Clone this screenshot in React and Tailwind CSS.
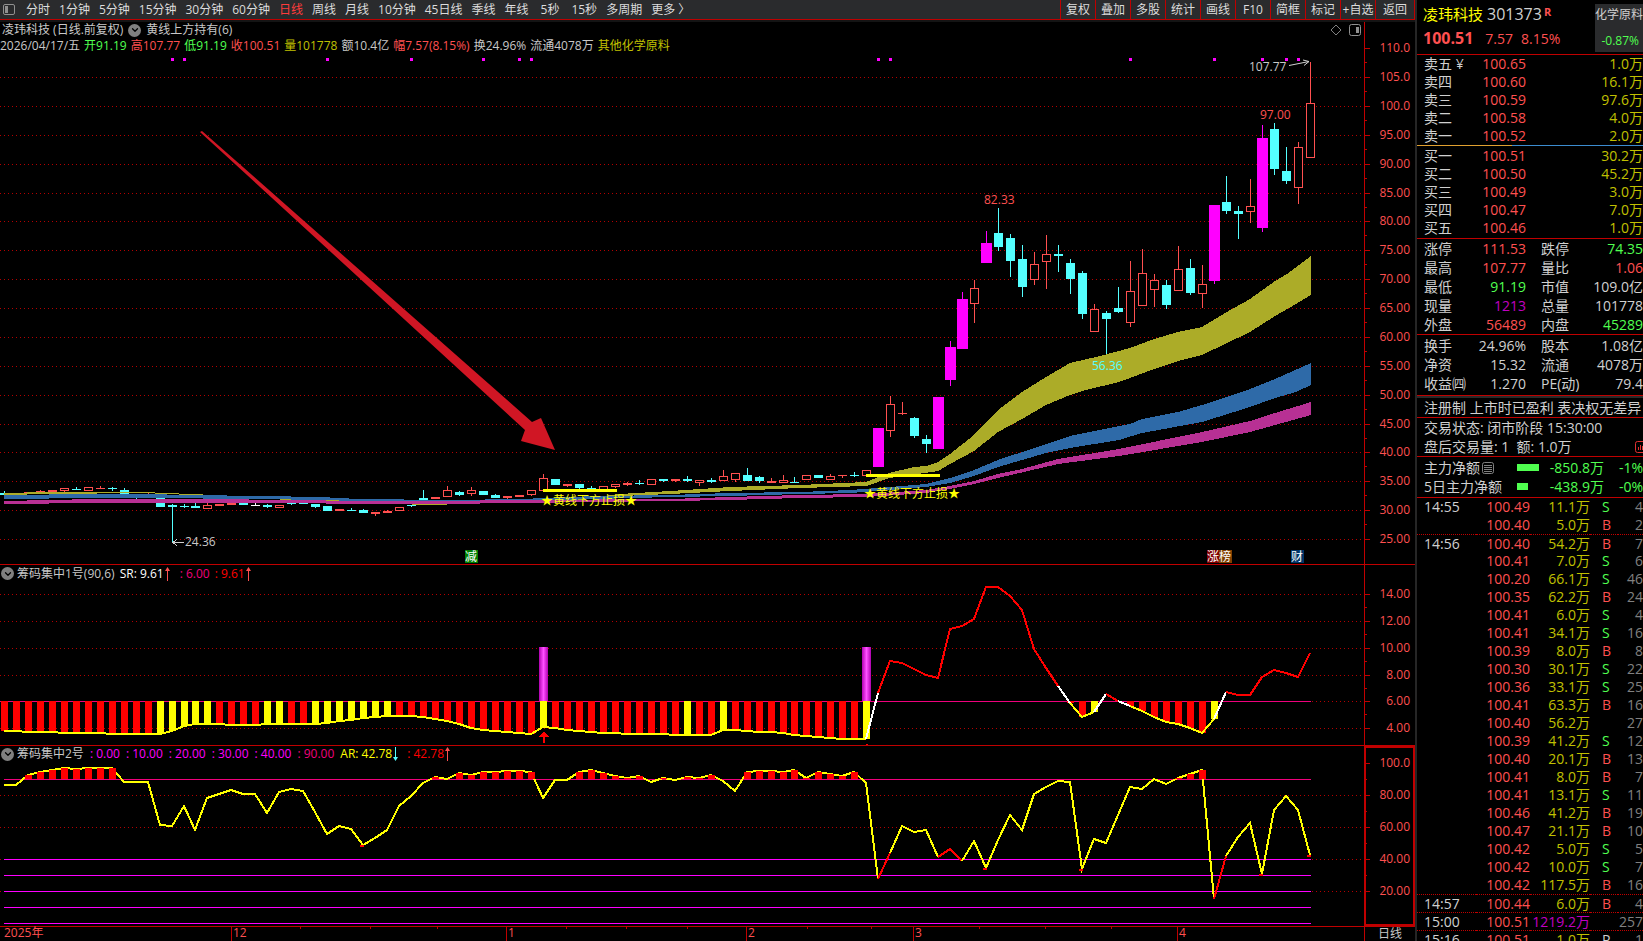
import { ChevronDown } from 'lucide-react';

const periods = ['分时', '1分钟', '5分钟', '15分钟', '30分钟', '60分钟', '日线', '周线', '月线', '10分钟', '45日线', '季线', '年线', '5秒', '15秒', '多周期', '更多 〉'];
const tools = ['复权', '叠加', '多股', '统计', '画线', 'F10', '简框', '标记', '+自选'];

//type, high, body top, body bottom, low. r = hollow red, c = cyan, m = limit up, w = flat
const candles = [
  ['c', 491, 493, 495, 495], ['c', 494, 494, 495, 496], ['r', 492, 492, 493, 493], ['r', 490, 491, 493, 493], ['r', 490, 490, 492, 492],
  ['r', 488, 488, 491, 492], ['c', 487, 489, 490, 490], ['r', 487, 487, 491, 491], ['r', 486, 488, 489, 489], ['c', 487, 488, 489, 491],
  ['c', 488, 490, 494, 494], ['c', 494, 494, 496, 499], ['r', 493, 494, 495, 495], ['c', 496, 497, 507, 507], ['c', 504, 505, 507, 542],
  ['c', 504, 506, 507, 508], ['c', 503, 506, 508, 508], ['r', 503, 505, 509, 509], ['r', 504, 504, 506, 506], ['r', 503, 503, 505, 505],
  ['c', 503, 503, 505, 505], ['w', 503, 505, 506, 506], ['c', 504, 505, 507, 508], ['r', 505, 505, 508, 508], ['c', 503, 503, 504, 505],
  ['c', 503, 503, 504, 504], ['c', 504, 504, 507, 508], ['c', 506, 506, 511, 511], ['r', 509, 509, 511, 511], ['c', 508, 510, 511, 511],
  ['c', 509, 510, 513, 513], ['r', 512, 512, 514, 516], ['r', 510, 511, 513, 513], ['r', 507, 507, 511, 511], ['c', 505, 505, 506, 507],
  ['c', 490, 498, 500, 500], ['r', 497, 497, 499, 499], ['r', 486, 490, 497, 497], ['c', 491, 492, 495, 496], ['r', 487, 490, 494, 496],
  ['c', 491, 491, 495, 495], ['c', 494, 495, 498, 498], ['r', 496, 496, 498, 499], ['r', 495, 495, 497, 497], ['r', 490, 490, 495, 496],
  ['r', 474, 478, 491, 491], ['c', 479, 479, 485, 485], ['r', 484, 484, 486, 487], ['c', 484, 484, 488, 489], ['c', 486, 488, 490, 490],
  ['r', 486, 486, 490, 490], ['r', 484, 484, 487, 488], ['r', 482, 483, 485, 486], ['c', 480, 483, 484, 485], ['r', 479, 479, 485, 485],
  ['c', 479, 479, 481, 482], ['r', 479, 479, 481, 482], ['c', 476, 479, 481, 482], ['r', 480, 480, 483, 486], ['c', 478, 480, 482, 483],
  ['r', 470, 476, 481, 481], ['r', 473, 473, 480, 482], ['c', 468, 475, 481, 481], ['c', 476, 477, 481, 483], ['r', 478, 481, 483, 483],
  ['r', 475, 480, 483, 483], ['c', 477, 482, 483, 483], ['r', 475, 475, 480, 480], ['c', 475, 475, 478, 478], ['r', 474, 476, 480, 480],
  ['r', 475, 475, 476, 478], ['c', 472, 475, 476, 477], ['r', 470, 470, 476, 476], ['m', 428, 428, 467, 467], ['r', 396, 404, 431, 437],
  ['r', 402, 413, 414, 415], ['c', 417, 418, 436, 438], ['c', 435, 439, 444, 453], ['m', 397, 397, 449, 449], ['m', 341, 347, 380, 386],
  ['m', 292, 299, 349, 349], ['r', 280, 288, 304, 323], ['m', 231, 243, 263, 263], ['c', 208, 233, 247, 251], ['c', 234, 238, 261, 277],
  ['c', 245, 259, 287, 297], ['r', 252, 264, 280, 285], ['r', 235, 254, 262, 289], ['c', 245, 254, 256, 272], ['c', 259, 263, 279, 294],
  ['c', 271, 273, 314, 319], ['r', 304, 309, 332, 332], ['c', 311, 313, 319, 354], ['c', 287, 308, 312, 313], ['r', 261, 291, 323, 327],
  ['r', 249, 273, 306, 306], ['r', 274, 280, 290, 307], ['c', 280, 285, 305, 309], ['r', 246, 269, 291, 291], ['c', 259, 268, 293, 295],
  ['r', 265, 284, 294, 308], ['m', 205, 205, 281, 284], ['c', 176, 202, 211, 214], ['c', 206, 211, 214, 239], ['r', 179, 206, 212, 223],
  ['m', 125, 138, 228, 232], ['c', 123, 129, 169, 175], ['c', 147, 171, 181, 184], ['r', 142, 147, 188, 204], ['r', 62, 103, 158, 158],
];
const candleColors = { r: '#ff5050', c: '#54ffff', m: '#ff00ff', w: '#ffffff' };

//moving average ribbons, upper edge left to right then lower edge right to left
const ribbons = [
  {
    color: '#acac28',
    top: '4,493 50,492 143,492 191,494 215,495 262,498 334,500 382,503 441,504 477,501 525,500 597,497 620,494 670,491 730,487 800,485 866,482 889,473 914,467 926,466 938,462 950,454 974,435 998,410 1022,392 1046,377 1070,363 1100,356 1130,348 1154,339 1178,332 1202,327 1225,313 1250,299 1275,281 1287,274 1311,256',
    bottom: '1311,295 1296,304 1275,316 1250,332 1225,344 1202,355 1178,361 1154,369 1130,378 1119,382 1082,391 1070,395 1046,405 1022,419 998,432 974,451 950,464 938,471 889,478 878,482 866,486 800,488 730,491 670,494 620,496 597,499 525,502 477,502 441,505 382,504 334,501 262,499 215,496 191,495 143,493 50,494 4,495',
  },
  {
    color: '#2e6aa8',
    top: '4,495 94,494 143,494 191,495 262,496 320,497 358,499 450,500 520,499 597,496 670,495 730,493 800,492 850,490 878,488 926,484 950,478 974,470 998,460 1046,444 1070,436 1094,431 1130,424 1142,419 1178,412 1202,405 1250,389 1275,379 1311,363',
    bottom: '1311,385 1296,392 1275,398 1250,407 1202,422 1142,433 1119,440 1070,448 1046,453 998,467 974,476 950,483 926,487 878,491 850,493 800,494 730,496 670,497 597,499 520,501 450,502 358,501 320,500 262,499 143,498 94,498 4,499',
  },
  {
    color: '#b83094',
    top: '4,501 94,499 190,499 305,500 346,501 440,501 520,500 670,499 730,497 800,495 866,494 926,490 950,486 974,481 998,474 1022,469 1058,459 1119,449 1202,432 1250,421 1275,413 1311,402',
    bottom: '1311,415 1250,432 1202,442 1119,456 1058,464 998,478 974,484 950,489 926,493 866,497 800,498 730,500 670,501 520,503 440,504 346,504 305,503 190,503 94,503 4,504',
  },
];

const signalDots = [14, 15, 27, 34, 40, 43, 44, 73, 74, 94, 101, 105, 107, 108];

const srLine = [
  731, 731, 732, 732, 732, 733, 733, 733, 733, 734, 734, 734, 734, 734, 731, 726, 724, 724, 724, 725, 725, 725,
  724, 724, 724, 724, 724, 723, 721, 720, 718, 717, 716, 716, 716, 717, 719, 721, 724, 728, 730, 731, 732, 733, 734,
  727, 728, 730, 731, 732, 733, 733, 734, 734, 734, 734, 735, 735, 735, 735, 730, 730, 731, 732, 732, 733, 735,
  736, 737, 738, 739, 739, 739, 693, 661, 663, 669, 675, 678, 629, 626, 619, 587, 587, 596, 610, 649, 668, 686,
  703, 717, 712, 694, 701, 706, 711, 717, 722, 724, 728, 733, 719, 692, 695, 695, 677, 670, 673, 677, 653,
];
const srSegments = [
  [0, 72, '#ffff00'], [72, 73, '#ffffff'], [73, 88, '#ff0000'], [88, 89, '#ffffff'], [89, 91, '#ffff00'], [91, 92, '#ffffff'],
  [92, 93, '#ff0000'], [93, 94, '#ffffff'], [94, 101, '#ffff00'], [101, 102, '#ffffff'], [102, 109, '#ff0000'],
];
const srYellowBars = [13, 14, 15, 16, 17, 22, 23, 26, 27, 28, 29, 30, 31, 32, 45, 57, 60, 72, 91, 101];

const arLine = [
  785, 785, 775, 772, 770, 768, 769, 768, 768, 768, 782, 782, 782, 825, 826, 806, 830, 798, 794, 790, 794, 794,
  813, 792, 789, 791, 812, 834, 826, 829, 845, 838, 830, 806, 796, 783, 777, 779, 773, 775, 772, 772, 771, 771, 772,
  798, 780, 780, 772, 770, 773, 776, 778, 776, 782, 778, 780, 777, 778, 775, 781, 791, 772, 771, 771, 772, 770,
  778, 772, 774, 776, 772, 783, 879, 853, 826, 832, 830, 857, 849, 861, 841, 868, 840, 815, 830, 794, 787, 781,
  782, 869, 839, 843, 815, 787, 789, 779, 784, 778, 774, 770, 899, 856, 837, 823, 874, 810, 796, 810, 855,
];
const arSegments = [
  [0, 73, '#ffff00'], [73, 74, '#ff0000'], [74, 78, '#ffff00'], [78, 80, '#ff0000'], [80, 101, '#ffff00'], [101, 102, '#ff0000'], [102, 109, '#ffff00'],
];

const priceTicks = [110, 105, 100, 95, 90, 85, 80, 75, 70, 65, 60, 55, 50, 45, 40, 35, 30, 25].map((v, i) => ({
  label: v > 99 ? v.toFixed(1) : v.toFixed(2),
  y: Math.round(48.2 + i * 28.87),
}));
const srTicks = [14, 12, 10, 8, 6, 4].map((v, i) => ({ label: v.toFixed(2), y: Math.round(594.2 + i * 26.8) }));
const arTicks = [100, 80, 60, 40, 20].map((v, i) => ({ label: v > 99 ? v.toFixed(1) : v.toFixed(2), y: 763 + i * 32 }));

const asks = [['卖五', '100.65', '1.0万'], ['卖四', '100.60', '16.1万'], ['卖三', '100.59', '97.6万'], ['卖二', '100.58', '4.0万'], ['卖一', '100.52', '2.0万']];
const bids = [['买一', '100.51', '30.2万'], ['买二', '100.50', '45.2万'], ['买三', '100.49', '3.0万'], ['买四', '100.47', '7.0万'], ['买五', '100.46', '1.0万']];

const R = 'text-[#ff5050]';
const G = 'text-[#50ff50]';
const W = 'text-[#d0d0d0]';
const P = 'text-[#c000c0]';
const Y = 'text-[#c0c000]';

const quotes = [
  ['涨停', '111.53', R], ['跌停', '74.35', G], ['最高', '107.77', R], ['量比', '1.06', R], ['最低', '91.19', G],
  ['市值', '109.0亿', W], ['现量', '1213', P], ['总量', '101778', W], ['外盘', '56489', R], ['内盘', '45289', G],
];
const basics = [['换手', '24.96%', W], ['股本', '1.08亿', W], ['净资', '15.32', W], ['流通', '4078万', W], ['收益㈣', '1.270', W], ['PE(动)', '79.4', W]];

const trades = [
  ['14:55', '100.49', '11.1万', 'S', 4], ['', '100.40', '5.0万', 'B', 2], ['14:56', '100.40', '54.2万', 'B', 7],
  ['', '100.41', '7.0万', 'S', 6], ['', '100.20', '66.1万', 'S', 46], ['', '100.35', '62.2万', 'B', 24],
  ['', '100.41', '6.0万', 'S', 4], ['', '100.41', '34.1万', 'S', 16], ['', '100.39', '8.0万', 'B', 8],
  ['', '100.30', '30.1万', 'S', 22], ['', '100.36', '33.1万', 'S', 25], ['', '100.41', '63.3万', 'B', 16],
  ['', '100.40', '56.2万', '', 27], ['', '100.39', '41.2万', 'S', 12], ['', '100.40', '20.1万', 'B', 13],
  ['', '100.41', '8.0万', 'B', 7], ['', '100.41', '13.1万', 'S', 11], ['', '100.46', '41.2万', 'B', 19],
  ['', '100.47', '21.1万', 'B', 10], ['', '100.42', '5.0万', 'S', 5], ['', '100.42', '10.0万', 'S', 7],
  ['', '100.42', '117.5万', 'B', 16], ['14:57', '100.44', '6.0万', 'B', 4], ['15:00', '100.51', '1219.2万', '', 257],
  ['15:16', '100.51', '1.0万', 'P', 1],
];
const sideColors = { S: G, B: R, P: W };

const xOf = (i) => Math.floor(4.3 + i * 11.98);
const pointsOf = (line, from, to) => line.slice(from, to + 1).map((y, k) => `${xOf(from + k)},${y}`).join(' ');

function Grid({ ticks }) {
  return ticks.map((t) => (
    <line key={t.y} x1="0" x2="1362" y1={t.y + 0.5} y2={t.y + 0.5} stroke="#b40000" strokeDasharray="1 3" />
  ));
}

function Lines({ line, segments }) {
  return segments.map(([from, to, color]) => (
    <polyline key={from} points={pointsOf(line, from, to)} fill="none" stroke={color} strokeWidth="2" />
  ));
}

//scale at the right of each chart
function Axis({ ticks, top, height, half, boxed }) {
  return (
    <svg className="h-full w-[51px] shrink-0" viewBox={`1364 ${top} 51 ${height}`} preserveAspectRatio="none" shapeRendering="crispEdges">
      <rect x="1364" y={top} width="1" height={height} fill="#c00000" />
      {boxed && <rect x="1365" y={top + 1} width="49" height={height - 2} fill="none" stroke="#c00000" strokeWidth="2" />}
      {ticks.map((t, i) => (
        <g key={t.y}>
          <rect x="1365" y={t.y} width="5" height="1" fill="#c00000" />
          {i < ticks.length - 1 && <rect x="1365" y={t.y + half} width="2" height="1" fill="#c00000" />}
          <text x="1410" y={t.y + 4} textAnchor="end" fontSize="12" fill="#ff5050">{t.label}</text>
        </g>
      ))}
    </svg>
  );
}

function Candle({ data, i }) {
  const [type, high, top, bottom, low] = data;
  const x = xOf(i);
  const color = candleColors[type];
  const w = type === 'm' ? 11 : 9;
  const h = Math.max(bottom - top, 1);
  const hollow = type === 'r' && h > 2;
  return (
    <g>
      <rect x={x} y={high} width="1" height={Math.max(low - high, 1)} fill={color} />
      {hollow
        ? <rect x={x - 3.5} y={top + 0.5} width="8" height={h - 1} fill="#000" stroke={color} />
        : <rect x={x - (w - 1) / 2} y={top} width={w} height={h} fill={color} />}
    </g>
  );
}

function Badge({ x, color, children }) {
  return (
    <g>
      <rect x={x} y="550" width="13" height="13" fill={color} />
      <text x={x + 6} y="561" textAnchor="middle" fontSize="12" fill="#fff">{children}</text>
    </g>
  );
}

function MainChart() {
  return (
    <svg className="block min-h-0 w-full flex-1" viewBox="0 54 1364 510" preserveAspectRatio="none" shapeRendering="crispEdges">
      <Grid ticks={priceTicks.slice(1)} />
      {signalDots.map((i) => <rect key={i} x={xOf(i) - 1} y="58" width="3" height="3" fill="#ff00ff" />)}
      {candles.map((c, i) => <Candle key={i} data={c} i={i} />)}
      {ribbons.map((r) => <polygon key={r.color} points={`${r.top} ${r.bottom}`} fill={r.color} />)}
      <rect x="543" y="489" width="74" height="3" fill="#ffff00" />
      <rect x="866" y="474" width="74" height="3" fill="#ffff00" />
      <g fontSize="12" fill="#ffff00">
        <text x="541" y="505">★黄线下方止损★</text>
        <text x="864" y="498">★黄线下方止损★</text>
      </g>
      <g fontSize="12" fill="#ff5050">
        <text x="984" y="204">82.33</text>
        <text x="1260" y="119">97.00</text>
        <text x="1092" y="370" fill="#54ffff">56.36</text>
        <text x="185" y="546" fill="#c8c8c8">24.36</text>
        <text x="1249" y="71" fill="#c8c8c8">107.77</text>
      </g>
      <g fill="none" stroke="#d0d0d0">
        <path d="M184 542.5H173M177 539l-4 3.5 4 3.5" />
        <path d="M1289 65.5L1309 61.5M1303 60l6 1.5-5 4" shapeRendering="auto" />
      </g>
      <polygon points="200,132 202,131 532,422 541,418 555,450 521,441 525,430" fill="#d01624" shapeRendering="auto" />
      <Badge x={465} color="#008000">减</Badge>
      <Badge x={1207} color="#800000">涨</Badge>
      <Badge x={1219} color="#804000">榜</Badge>
      <Badge x={1291} color="#003468">财</Badge>
    </svg>
  );
}

function SrChart() {
  return (
    <svg className="block min-h-0 w-full flex-1" viewBox="0 582 1364 163" preserveAspectRatio="none" shapeRendering="crispEdges">
      <defs>
        <linearGradient id="pillar">
          <stop offset="0" stopColor="#b000b0" />
          <stop offset="0.5" stopColor="#ff50ff" />
          <stop offset="1" stopColor="#b000b0" />
        </linearGradient>
      </defs>
      <Grid ticks={srTicks} />
      <rect x="0" y="701" width="1311" height="1" fill="#f0007c" />
      {srLine.map((y, i) => y > 702 && (
        <rect key={i} x={xOf(i) - 3} y="701" width="7" height={y - 701} fill={srYellowBars.includes(i) ? '#ffff00' : '#ff0000'} />
      ))}
      <Lines line={srLine} segments={srSegments} />
      {[45, 72].map((i) => <rect key={i} x={xOf(i) - 4} y="647" width="9" height="54" fill="url(#pillar)" />)}
      <path d="M544 731l5 6h-4v6h-2v-6h-4z" fill="#ff0000" />
      <rect x="866" y="744" width="2" height="1" fill="#ff0000" />
    </svg>
  );
}

function ArChart() {
  return (
    <svg className="block min-h-0 w-full flex-1" viewBox="0 762 1364 164" preserveAspectRatio="none" shapeRendering="crispEdges">
      <Grid ticks={arTicks.slice(1)} />
      <rect x="4" y="779" width="1307" height="1" fill="#f0007c" />
      {[859, 875, 891, 907, 923].map((y) => <rect key={y} x="4" y={y} width="1307" height="1" fill="#ff00ff" />)}
      <Lines line={arLine} segments={arSegments} />
      {arLine.map((y, i) => y < 779 && <rect key={i} x={xOf(i) - 3} y={y} width="7" height={779 - y} fill="#ff0000" />)}
      {[30, 82, 90, 105, 109].map((i) => <rect key={i} x={xOf(i) - 3} y={arLine[i]} width="4" height="2" fill="#ff0000" />)}
    </svg>
  );
}

function Arrow({ down }) {
  return (
    <svg className={down ? 'inline-block h-3.5 w-[7px] rotate-180 text-[#54ffff]' : 'inline-block h-3.5 w-[7px] text-[#ff5050]'} viewBox="0 0 7 14">
      <path d="M3 14V4H1l2.500-4L6 4H4v10z" fill="currentColor" />
    </svg>
  );
}

function Toggle({ label }) {
  return (
    <button aria-label={label} className="flex size-[13px] shrink-0 items-center justify-center rounded-full bg-[#808080] text-black">
      <ChevronDown size={10} strokeWidth={3} />
    </button>
  );
}

function TopBar() {
  return (
    <nav className="flex h-[22px] shrink-0 border-b-2 border-[#141414] bg-[#2a2b2d] text-[12px] text-[#dcdcdc]">
      <div className="flex min-w-0 flex-1 items-center gap-[9px] overflow-hidden border-b border-[#c00000] pl-[3px]">
        <button aria-label="侧栏" className="mr-0.5 flex h-[11px] w-3 shrink-0 rounded-xs border border-[#909090] p-px">
          <span className="h-full w-[3px] bg-[#909090]" />
        </button>
        {periods.map((p) => (
          <button key={p} className={p === '日线' ? 'shrink-0 text-[#ff3c3c]' : p === '5秒' ? 'shrink-0 px-[3px]' : 'shrink-0'}>{p}</button>
        ))}
      </div>
      {tools.map((t) => (
        <button key={t} className="w-[35px] shrink-0 overflow-hidden border-b border-l border-[#c00000] whitespace-nowrap">{t}</button>
      ))}
      <button className="w-10 shrink-0 border-x border-b border-[#c00000]">返回</button>
    </nav>
  );
}

function DateAxis() {
  const months = [[231, '12'], [506, '1'], [746, '2'], [913, '3'], [1177, '4']];
  const minor = [300, 370, 437, 566, 626, 687, 807, 871, 979, 1045, 1111];
  return (
    <div className="flex h-[14px] shrink-0">
      <svg className="block h-full min-w-0 flex-1 overflow-visible" viewBox="0 927 1364 14" preserveAspectRatio="none" shapeRendering="crispEdges">
        {months.map(([x, label]) => (
          <g key={x}>
            <rect x={x} y="927" width="1" height="14" fill="#c00000" />
            <text x={x + 2} y="937" fontSize="12" fill="#ff5050">{label}</text>
          </g>
        ))}
        {minor.map((x) => <rect key={x} x={x} y="927" width="1" height="2" fill="#c00000" />)}
        <text x="4" y="937" fontSize="12" fill="#ff5050">2025年</text>
      </svg>
      <div className="w-[51px] shrink-0 border-l border-[#c00000] text-center text-[12px] leading-[14px] text-[#c8c8c8]">日线</div>
    </div>
  );
}

function Depth({ rows }) {
  return (
    <table className="w-full table-fixed leading-[18px]">
      <tbody>
        {rows.map(([name, price, volume]) => (
          <tr key={name} className="h-[18px]">
            <th scope="row" className="w-[51px] p-0 text-left font-normal whitespace-nowrap">{name}{name === '卖五' && ' ¥'}</th>
            <td className="w-[51px] p-0 text-right text-[#ff5050]">{price}</td>
            <td className="p-0 text-right text-[#c0c000]">{volume}</td>
          </tr>
        ))}
      </tbody>
    </table>
  );
}

function Facts({ rows }) {
  return (
    <dl className="grid grid-cols-2 gap-x-[15px] leading-[19px]">
      {rows.map(([name, value, color]) => (
        <div key={name} className="flex justify-between whitespace-nowrap">
          <dt>{name}</dt>
          <dd className={color}>{value}</dd>
        </div>
      ))}
    </dl>
  );
}

function Sidebar() {
  return (
    <aside className="flex w-[226px] shrink-0 flex-col overflow-hidden text-[14px] text-[#d0d0d0]">
      <header className="flex h-[55px] shrink-0 justify-between border-b border-[#c00000] pt-1 pl-1.5 whitespace-nowrap">
        <div>
          <h1 className="flex h-5 items-center text-[15px] text-[#ffff00]">
            凌玮科技
            <span className="ml-1 text-[16px] text-[#d0d0d0]">301373</span>
            <sup className="top-0 ml-0.5 self-start text-[11px] leading-4 font-bold text-[#ff5050]">R</sup>
          </h1>
          <p className="mt-1 flex h-5 items-center text-[#ff5050]">
            <strong className="text-[16px]">100.51</strong>
            <span className="ml-3">7.57</span>
            <span className="ml-2">8.15%</span>
          </p>
        </div>
        <a href="#sector" className="flex h-12 w-12 flex-col items-end justify-between bg-[#2a2b2d] py-px text-[12px] leading-5">
          <span>化学原料</span>
          <span className="pr-1 text-[#50ff50]">-0.87%</span>
        </a>
      </header>
      <div className="pl-[7px]"><Depth rows={asks} /></div>
      <div className="flex h-px shrink-0">
        <div className="w-[42%] bg-[#e0a030]" />
        <div className="flex-1 bg-[#3c8cd0]" />
      </div>
      <div className="border-b border-[#c00000] py-px pl-[7px]"><Depth rows={bids} /></div>
      <div className="border-b border-[#c00000] pl-[7px]"><Facts rows={quotes} /></div>
      <div className="border-b border-[#c00000] pt-px pb-0.5 pl-[7px]"><Facts rows={basics} /></div>
      <p className="border-t-2 border-b border-t-[#2a2a2a] border-b-[#c00000] pl-[7px] leading-[19px] whitespace-nowrap">注册制 上市时已盈利 表决权无差异</p>
      <div className="border-b border-[#c00000] pl-[7px] leading-[19px] whitespace-nowrap">
        <p>交易状态: 闭市阶段 15:30:00</p>
        <p className="flex items-center justify-between">
          <span>盘后交易量: 1&nbsp; 额: 1.0万</span>
          <svg className="h-3 w-2 shrink-0" viewBox="0 0 8 12" fill="none" stroke="#e03030">
            <path d="M8 .5H2.500a2 2 0 0 0-2 2v7a2 2 0 0 0 2 2H8M3.500 9V6M5.500 9V4M7.500 9V5" />
          </svg>
        </p>
      </div>
      <div className="border-b border-[#c00000] py-px pl-[7px] leading-[19px] whitespace-nowrap">
        <div className="flex items-center text-[#50ff50]">
          <span className="flex w-[93px] items-center gap-0.5 text-[#d0d0d0]">
            主力净额
            <svg className="size-3" viewBox="0 0 12 12" fill="none" stroke="#808080">
              <rect x=".5" y=".5" width="11" height="11" rx="2" />
              <path d="M2 3.500h8M2 5.500h8M2 7.500h8M2 9.500h8" />
            </svg>
          </span>
          <span className="h-[7px] w-[22px] bg-[#50ff50]" />
          <span className="w-[65px] text-right">-850.8万</span>
          <span className="flex-1 text-right">-1%</span>
        </div>
        <div className="flex items-center text-[#50ff50]">
          <span className="w-[93px] text-[#d0d0d0]">5日主力净额</span>
          <span className="mr-[11px] h-[7px] w-[11px] bg-[#50ff50]" />
          <span className="w-[65px] text-right">-438.9万</span>
          <span className="flex-1 text-right">-0%</span>
        </div>
      </div>
      <table className="w-full table-fixed border-separate border-spacing-0 whitespace-nowrap">
        <tbody>
          {trades.map(([time, price, volume, side, count], i) => (
            <tr key={i} className={time && i ? 'h-[18px] leading-[17px] [&>td]:border-t [&>td]:border-dotted [&>td]:border-[#c00000]' : 'h-[18px] leading-[18px]'}>
              <td className="w-[59px] p-0 pl-[7px]">{time}</td>
              <td className="w-[54px] p-0 text-right text-[#ff5050]">{price}</td>
              <td className={volume === '1219.2万' ? `w-[60px] p-0 text-right ${P}` : `w-[60px] p-0 text-right ${Y}`}>{volume}</td>
              <td className={`w-7 p-0 pl-3 ${sideColors[side] || ''}`}>{side}</td>
              <td className="p-0 text-right text-[#808080]">{count}</td>
            </tr>
          ))}
        </tbody>
      </table>
    </aside>
  );
}

export default function App() {
  return (
    <div className="flex h-screen overflow-hidden bg-black font-['Open_Sans','Noto_Sans_CJK_SC',sans-serif] text-[12px] text-[#c8c8c8]">
      <main className="flex min-w-0 flex-1 flex-col">
        <TopBar />
        <div className="grid min-h-0 flex-1 grid-rows-[3fr_1fr_1fr]">
          <section className="flex min-h-0 border-b border-[#c00000]">
            <div className="flex min-w-0 flex-1 flex-col">
              <div className="flex h-4 items-center gap-[5px] pl-0.5 whitespace-nowrap">
                <span>凌玮科技 (日线.前复权)</span>
                <Toggle label="黄线上方持有" />
                <span>黄线上方持有(6)</span>
                <svg className="ml-auto size-3" viewBox="0 0 12 12" fill="none" stroke="#808080">
                  <path d="M6 1l5 5-5 5-5-5z" />
                </svg>
                <svg className="mr-[3px] ml-0.5 h-3 w-3" viewBox="0 0 12 12" fill="none" stroke="#909090">
                  <rect x=".5" y=".5" width="11" height="11" rx="2" />
                  <rect x="7" y="3" width="3" height="6" fill="#909090" stroke="none" />
                </svg>
              </div>
              <div className="flex h-4 items-center gap-1 whitespace-nowrap">
                <span>2026/04/17/五</span>
                <span className={G}>开91.19</span>
                <span className={R}>高107.77</span>
                <span className={G}>低91.19</span>
                <span className={R}>收100.51</span>
                <span className={Y}>量101778</span>
                <span>额10.4亿</span>
                <span className={R}>幅7.57(8.15%)</span>
                <span>换24.96%</span>
                <span>流通4078万</span>
                <span className={Y}>其他化学原料</span>
              </div>
              <MainChart />
            </div>
            <Axis ticks={priceTicks} top={22} height={542} half={14} />
          </section>
          <section className="flex min-h-0 border-b border-[#c00000]">
            <div className="flex min-w-0 flex-1 flex-col">
              <div className="flex h-[17px] items-center gap-[5px] pl-px whitespace-nowrap">
                <span className="flex items-center gap-[3px]">
                  <Toggle label="筹码集中1号" />
                  筹码集中1号(90,6)
                </span>
                <span className="flex items-center text-white">SR: 9.61<Arrow /></span>
                <span className="ml-1 text-[#f0007c]">: 6.00</span>
                <span className="flex items-center text-[#ff0000]">: 9.61<Arrow /></span>
              </div>
              <SrChart />
            </div>
            <Axis ticks={srTicks} top={565} height={180} half={13} />
          </section>
          <section className="flex min-h-0 border-b border-[#c00000]">
            <div className="flex min-w-0 flex-1 flex-col">
              <div className="flex h-4 items-center gap-1.5 pl-px whitespace-nowrap">
                <span className="flex items-center gap-[3px]">
                  <Toggle label="筹码集中2号" />
                  筹码集中2号
                </span>
                {['0.00', '10.00', '20.00', '30.00', '40.00'].map((v) => <span key={v} className="text-[#ff00ff]">: {v}</span>)}
                <span className="text-[#f0007c]">: 90.00</span>
                <span className="flex items-center text-[#ffff00]">AR: 42.78<Arrow down /></span>
                <span className="ml-0.5 flex items-center text-[#ff0000]">: 42.78<Arrow /></span>
              </div>
              <ArChart />
            </div>
            <Axis ticks={arTicks} top={746} height={180} half={16} boxed />
          </section>
        </div>
        <DateAxis />
      </main>
      <div className="w-0.5 shrink-0 bg-[#262626]" />
      <Sidebar />
    </div>
  );
}
